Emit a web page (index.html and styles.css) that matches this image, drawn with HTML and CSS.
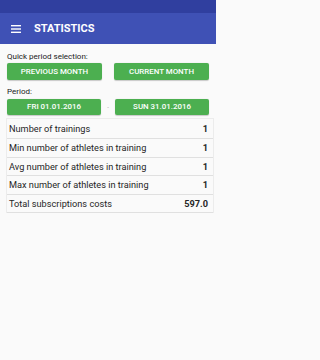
FILE: index.html
```html
<!DOCTYPE html>
<html>
<head>
<meta charset="utf-8">
<link rel="stylesheet" href="styles.css">
</head>
<body>
<div class="statusbar"></div>
<header class="toolbar">
  <svg class="menu" width="10" height="8" viewBox="0 0 10 8"><rect x="0" y="0" width="10" height="1.4" fill="#fff"/><rect x="0" y="3.3" width="10" height="1.4" fill="#fff"/><rect x="0" y="6.6" width="10" height="1.4" fill="#fff"/></svg>
  <div class="title">STATISTICS</div>
</header>
<main class="content">
  <div class="label">Quick period selection:</div>
  <div class="btnrow">
    <div class="btn">PREVIOUS MONTH</div>
    <div class="btn">CURRENT MONTH</div>
  </div>
  <div class="label label2">Period:</div>
  <div class="btnrow daterow">
    <div class="btn">FRI 01.01.2016</div>
    <div class="dash">-</div>
    <div class="btn">SUN 31.01.2016</div>
  </div>
  <div class="table">
    <div class="row first"><span>Number of trainings</span><span class="val">1</span></div>
    <div class="row"><span>Min number of athletes in training</span><span class="val">1</span></div>
    <div class="row"><span>Avg number of athletes in training</span><span class="val">1</span></div>
    <div class="row"><span>Max number of athletes in training</span><span class="val">1</span></div>
    <div class="row"><span>Total subscriptions costs</span><span class="val">597.0</span></div>
  </div>
</main>
</body>
</html>
```
FILE: styles.css
```css
html, body {
  margin: 0;
  padding: 0;
}
body {
  width: 216px;
  height: 360px;
  background: #fafafa;
  font-family: Roboto, "Liberation Sans", sans-serif;
  color: #212121;
  overflow: hidden;
}
.statusbar {
  height: 13px;
  background: #303f9f;
}
.toolbar {
  height: 31px;
  background: #3f51b5;
  display: flex;
  align-items: center;
  padding-left: 11px;
}
.menu {
  display: block;
}
.title {
  margin-left: 13px;
  color: #fff;
  font-size: 11px;
  font-weight: 700;
}
.content {
  padding: 8px 4px 0 7px;
}
.label {
  font-size: 8px;
  line-height: 10px;
  color: #212121;
}
.label2 {
  margin-top: 7px;
}
.btnrow {
  display: flex;
  gap: 12px;
  margin-top: 1px;
}
.daterow {
  gap: 0;
  margin-top: 2px;
}
.btn {
  width: 95px;
  height: 16.5px;
  background: #4caf50;
  border-radius: 2px;
  color: #fff;
  font-size: 7.9px;
  font-weight: 500;
  display: flex;
  align-items: center;
  justify-content: center;
  box-shadow: 0 0.5px 1px rgba(0,0,0,0.2);
}
.daterow .btn {
  width: 94px;
}
.dash {
  width: 14px;
  font-size: 6px;
  color: #9e9e9e;
  display: flex;
  align-items: center;
  justify-content: center;
}
.table {
  margin-top: 2.5px;
  margin-left: -1px;
  width: 206px;
  border: 1px solid #ececec;
  border-bottom: none;
  font-size: 9.2px;
  color: #262626;
}
.row {
  display: flex;
  justify-content: space-between;
  align-items: center;
  height: 17.5px;
  padding: 0 5px 0 2px;
  border-bottom: 1px solid #e0e0e0;
}
.row.first {
  height: 19.5px;
}
.val {
  font-weight: 700;
}
```
